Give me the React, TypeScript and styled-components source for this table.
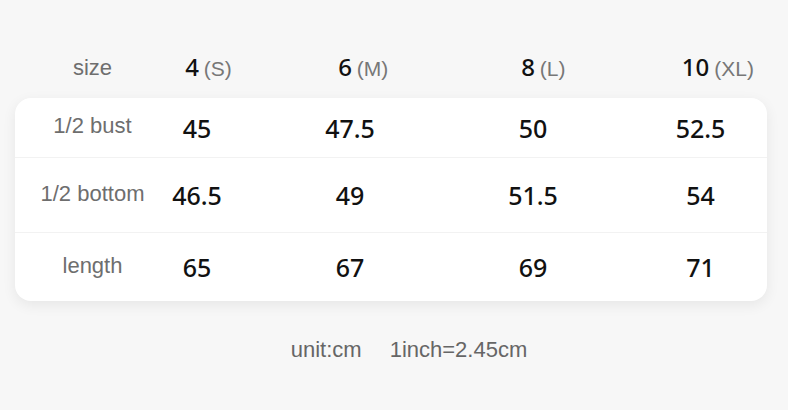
import React from 'react';
import styled, { createGlobalStyle } from 'styled-components';

const GlobalStyle = createGlobalStyle`
html, body {
  margin: 0;
  padding: 0;
  background: #f7f7f7;
}
`;

const COLUMNS = '135px 94px 212px 154px 157px';

const Page = styled.div`
width: 788px;
height: 410px;
box-sizing: border-box;
padding-top: 40px;
background: #f7f7f7;
overflow: hidden;
`;

const HeaderRow = styled.div`
display: grid;
grid-template-columns: ${COLUMNS};
align-items: center;
height: 58px;
margin: 0 21px 0 15px;
`;

const Card = styled.div`
margin: 0 21px 0 15px;
background: #ffffff;
border-radius: 16px;
box-shadow: 0 4px 14px rgba(0, 0, 0, 0.07);
overflow: hidden;
`;

const Row = styled.div<{ height: number; last?: boolean }>`
display: grid;
grid-template-columns: ${COLUMNS};
align-items: center;
height: ${props => props.height}px;
border-bottom: ${props => (props.last ? 'none' : '1px solid #f2f2f2')};
`;

const Label = styled.div`
padding-left: 20px;
padding-bottom: 3px;
text-align: center;
font-family: 'Liberation Sans', Arial, sans-serif;
font-size: 22px;
color: #6e6e6e;
`;

const Value = styled.div<{ shift?: number }>`
padding-left: ${props => props.shift || 0}px;
text-align: center;
font-family: 'Noto Sans', sans-serif;
font-size: 25px;
font-weight: 500;
color: #111111;
`;

const SizeCell = styled.div<{ shift?: number }>`
display: grid;
grid-template-columns: 1fr auto 1fr;
align-items: baseline;
padding-left: ${props => props.shift || 0}px;
padding-right: 10px;
padding-bottom: 6px;
`;

const SizeNumber = styled.span`
grid-column: 2;
font-family: 'Noto Sans', sans-serif;
font-size: 24px;
font-weight: 500;
color: #111111;
`;

const SizeLetter = styled.span`
grid-column: 3;
margin-left: 5px;
font-family: 'Liberation Sans', Arial, sans-serif;
font-size: 21px;
color: #777777;
white-space: nowrap;
`;

const Footer = styled.div`
display: flex;
justify-content: center;
gap: 28px;
margin-top: 36px;
padding-left: 30px;
font-family: 'Liberation Sans', Arial, sans-serif;
font-size: 22px;
line-height: 26px;
color: #666666;
`;

const sizes = [
  { num: '4', letter: '(S)' },
  { num: '6', letter: '(M)' },
  { num: '8', letter: '(L)' },
  { num: '10', letter: '(XL)' },
];

const rows = [
  { label: '1/2 bust', values: ['45', '47.5', '50', '52.5'], height: 59 },
  { label: '1/2 bottom', values: ['46.5', '49', '51.5', '54'], height: 74 },
  { label: 'length', values: ['65', '67', '69', '71'], height: 68 },
];

export default function App() {
  return (
    <Page>
      <GlobalStyle />
      <HeaderRow>
        <Label>size</Label>
        {sizes.map((s, i) => (
          <SizeCell key={s.num} shift={i === 3 ? 24 : 0}>
            <SizeNumber>{s.num}</SizeNumber>
            <SizeLetter>{s.letter}</SizeLetter>
          </SizeCell>
        ))}
      </HeaderRow>
      <Card>
        {rows.map((r, ri) => (
          <Row key={r.label} height={r.height} last={ri === rows.length - 1}>
            <Label>{r.label}</Label>
            {r.values.map((v, i) => (
              <Value key={i} shift={i === 3 ? 24 : 0}>{v}</Value>
            ))}
          </Row>
        ))}
      </Card>
      <Footer>
        <span>unit:cm</span>
        <span>1inch=2.45cm</span>
      </Footer>
    </Page>
  );
}
